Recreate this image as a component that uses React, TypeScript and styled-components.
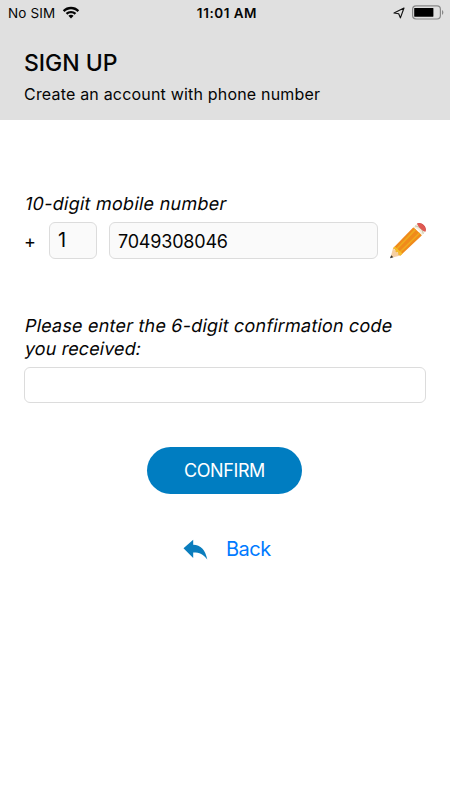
import React from "react";
import styled, { createGlobalStyle } from "styled-components";

const GlobalStyle = createGlobalStyle`
  *, *::before, *::after { box-sizing: border-box; }
  body { margin: 0; background: #fff; }
  input, button { font: inherit; color: inherit; margin: 0; }
`;

const Screen = styled.div`
  display: flex;
  flex-direction: column;
  width: 450px;
  height: 800px;
  overflow: hidden;
  background: #fff;
  color: #050505;
  font-family: Inter, "Liberation Sans", sans-serif;
  font-weight: 400;
`;

const Header = styled.header`
  height: 120px;
  background: #e0e0e0;
`;

const StatusBar = styled.div`
  display: grid;
  grid-template-columns: 1fr auto 1fr;
  align-items: center;
  height: 25px;
  padding: 0 6px 0 8px;
  line-height: 16px;
`;

const StatusGroup = styled.div<{ $end?: boolean }>`
  display: flex;
  align-items: center;
  justify-content: ${(p) => (p.$end ? "flex-end" : "flex-start")};
  gap: 7px;
`;

const Carrier = styled.span`
  font-size: 13.5px;
  letter-spacing: 0.15px;
`;

const Clock = styled.time`
  padding-left: 2px;
  font-size: 13.5px;
  font-weight: 600;
  letter-spacing: 0.6px;
  word-spacing: -0.5px;
`;

const Heading = styled.div`
  padding: 23px 24px 0;
`;

const Title = styled.h1`
  margin: 0;
  font-size: 23px;
  font-weight: 500;
  line-height: 30px;
`;

const Subtitle = styled.p`
  margin: 6px 0 0;
  font-size: 16px;
  line-height: 20px;
  letter-spacing: 0.19px;
`;

const Form = styled.form`
  display: flex;
  flex-direction: column;
  padding: 72px 24px 0;
`;

const Label = styled.label`
  font-size: 18px;
  line-height: 23px;
`;

/* Slants the upright face so the letters keep their roman shapes. */
const SlantedLine = styled.span<{ $tracking: number }>`
  display: block;
  width: max-content;
  transform: skewX(-11deg);
  transform-origin: 0 78%;
  letter-spacing: ${(p) => p.$tracking}px;
`;

const PhoneRow = styled.div`
  display: flex;
  align-items: flex-start;
  height: 37px;
  margin: 7px 0 55px;
`;

const Plus = styled.span`
  width: 25px;
  font-size: 18px;
  line-height: 39px;
`;

const Field = styled.input<{ $width: number; $locked?: boolean }>`
  width: ${(p) => p.$width}px;
  height: 37px;
  padding: 1px 8px 0;
  border: 1px solid #dcdcdc;
  border-radius: 6px;
  outline: none;
  background: ${(p) => (p.$locked ? "#fafafa" : "#fff")};
  font-size: 18px;
  letter-spacing: -0.2px;
`;

const CountryField = styled(Field)`
  margin-right: 12px;
  padding: 0 8px 2px;
  font-size: 20px;
`;

const EditButton = styled.button`
  width: 37px;
  height: 37px;
  margin-left: 11px;
  padding: 0;
  border: 0;
  background: none;
`;

const CodeField = styled(Field)`
  margin-top: 7px;
  height: 36px;
`;

const ConfirmButton = styled.button`
  align-self: center;
  width: 155px;
  height: 47px;
  margin: 44px 1px 0 0;
  padding: 0;
  border: 0;
  border-radius: 24px;
  background: #007dc1;
  color: #fff;
  font-size: 18px;
  line-height: 47px;
  letter-spacing: -0.4px;
`;

const BackLink = styled.a`
  display: flex;
  align-items: center;
  gap: 18px;
  margin: 42px 0 0 159px;
  color: #007aff;
  font-size: 20px;
  line-height: 26px;
  letter-spacing: -0.5px;
`;

const Svg = styled.svg`
  display: block;
  flex: none;
`;

const WifiIcon = () => (
  <Svg width="18" height="13" viewBox="0 0 18 13" fill="#050505">
    <path d="M.8 4.2C5.3-.4 12.7-.4 17.2 4.2L15.5 5.9C11.9 2.3 6.1 2.3 2.5 5.9Z" />
    <path d="M3.7 7.1C6.6 4.2 11.4 4.2 14.3 7.1L12.6 8.7C10.6 6.8 7.4 6.8 5.4 8.7Z" />
    <path d="M6.4 9.8C7.9 8.4 10.1 8.4 11.6 9.8L9 12.4Z" />
  </Svg>
);

const LocationIcon = () => (
  <Svg width="12" height="12" viewBox="0 0 12 12" fill="none" stroke="#111" strokeWidth="1.15" strokeLinejoin="round">
    <path d="M11 1 7.4 10.9 5.7 6.8 1 6Z" />
  </Svg>
);

const BatteryIcon = () => (
  <Svg width="32" height="15" viewBox="0 0 32 15">
    <rect x=".6" y=".8" width="27.8" height="13.2" rx="3.4" fill="none" stroke="#888" strokeWidth="1.2" />
    <rect x="2.2" y="2.9" width="19.2" height="8.8" rx=".4" fill="#000" />
    <path d="M30 5v4.8c1.8-.7 1.8-4 0-4.8Z" fill="#888" />
  </Svg>
);

const PencilIcon = () => (
  <Svg width="37" height="37" viewBox="0 0 37 37">
    <path d="M4 26.3 11.5 33.5 1.4 36Z" fill="#f5cfa3" />
    <path d="M2.2 33.2 4.4 35.2 1 36.2Z" fill="#333" />
    <path d="M4 26.3 24.4 5.2 33 13.2 11.5 33.6 9.6 32.8 9.5 30.2 6.9 30 6.6 27.7Z" fill="#f08a1c" />
    <path d="M6.6 28.2 26.5 7.4M9.7 31.4 30.6 11" stroke="#efa91f" strokeWidth="1.7" />
    <path d="M4 26.3 6.6 27.7 6.9 30 9.5 30.2 9.6 32.8 11.5 33.6 13.6 31.6 5.8 24.4Z" fill="#f5bd2b" />
    <path d="M24.2 5.4 28 1.8Q35.8 3 36.2 9.7L32.6 13.4Q31.3 6.6 24.2 5.4Z" fill="#f2eddb" />
    <path d="M26 3.9Q33.2 5 34.3 11.8" fill="none" stroke="#c6bfa9" strokeWidth=".9" />
    <path d="M28 1.8C32-1.2 39.2 5.2 36.2 9.7Q34.7 3.4 28 1.8Z" fill="#cf4544" />
    <path d="M28 1.8C31.4-.2 37.7 4.7 36.2 9.7 33.2 9 29.5 5.4 28 1.8Z" fill="#df5952" />
  </Svg>
);

const ReplyIcon = () => (
  <Svg width="25" height="21" viewBox="0 0 25 21" fill="#0a7dbd">
    <path d="M.5 9.3 10.2 .8v4.9C17.8 6 22.2 10.5 24.3 20.4 20.3 15.1 16.2 13.3 10.2 13.4v5.7Z" />
  </Svg>
);

export default function App() {
  return (
    <Screen>
      <GlobalStyle />
      <Header>
        <StatusBar>
          <StatusGroup>
            <Carrier>No SIM</Carrier>
            <WifiIcon />
          </StatusGroup>
          <Clock>11:01 AM</Clock>
          <StatusGroup $end>
            <LocationIcon />
            <BatteryIcon />
          </StatusGroup>
        </StatusBar>
        <Heading>
          <Title>SIGN UP</Title>
          <Subtitle>Create an account with phone number</Subtitle>
        </Heading>
      </Header>
      <Form>
        <Label htmlFor="phone">
          <SlantedLine $tracking={0.26}>10-digit mobile number</SlantedLine>
        </Label>
        <PhoneRow>
          <Plus>+</Plus>
          <CountryField $width={48} $locked defaultValue="1" readOnly />
          <Field id="phone" $width={269} $locked defaultValue="7049308046" readOnly />
          <EditButton type="button" aria-label="Edit phone number">
            <PencilIcon />
          </EditButton>
        </PhoneRow>
        <Label htmlFor="code">
          <SlantedLine $tracking={0.2}>Please enter the 6-digit confirmation code</SlantedLine>
          <SlantedLine $tracking={0.1}>you received:</SlantedLine>
        </Label>
        <CodeField id="code" $width={402} />
        <ConfirmButton type="button">CONFIRM</ConfirmButton>
        <BackLink>
          <ReplyIcon />
          Back
        </BackLink>
      </Form>
    </Screen>
  );
}
